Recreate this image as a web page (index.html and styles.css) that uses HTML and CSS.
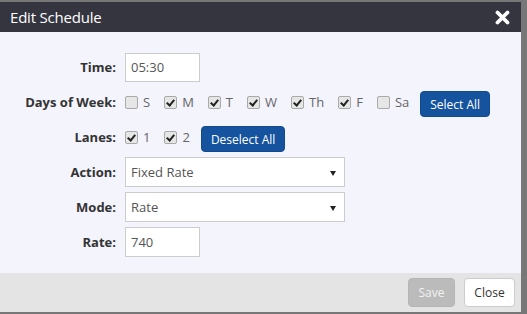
FILE: index.html
```html
<!DOCTYPE html>
<html lang="en">
<head>
	<meta charset="UTF-8">
	<title>Edit Schedule</title>
	<link rel="stylesheet" href="styles.css">
</head>
<body>
	<div class="modal">
		<!-- header -->
		<div class="modal-head">
			<span class="title">Edit Schedule</span>
			<svg class="close-x" width="15" height="15" viewBox="0 0 15 15">
				<path d="M2.5 2.5 L12.5 12.5 M12.5 2.5 L2.5 12.5" stroke="#fff" stroke-width="3.8" stroke-linecap="round"/>
			</svg>
		</div>
		<!-- form -->
		<div class="modal-body">
			<div class="row">
				<label class="lbl">Time:</label>
				<div class="field"><input class="txt short" type="text" value="05:30"></div>
			</div>
			<div class="row checks">
				<label class="lbl">Days of Week:</label>
				<div class="field">
					<span class="chk"><i class="box"></i>S</span>
					<span class="chk"><i class="box on"></i>M</span>
					<span class="chk"><i class="box on"></i>T</span>
					<span class="chk"><i class="box on"></i>W</span>
					<span class="chk"><i class="box on"></i>Th</span>
					<span class="chk"><i class="box on"></i>F</span>
					<span class="chk last"><i class="box"></i>Sa</span>
					<button class="btn blue">Select All</button>
				</div>
			</div>
			<div class="row checks">
				<label class="lbl">Lanes:</label>
				<div class="field">
					<span class="chk"><i class="box on"></i>1</span>
					<span class="chk last"><i class="box on"></i>2</span>
					<button class="btn blue">Deselect All</button>
				</div>
			</div>
			<div class="row">
				<label class="lbl">Action:</label>
				<div class="field"><div class="sel">Fixed Rate</div></div>
			</div>
			<div class="row">
				<label class="lbl">Mode:</label>
				<div class="field"><div class="sel">Rate</div></div>
			</div>
			<div class="row">
				<label class="lbl">Rate:</label>
				<div class="field"><input class="txt short" type="text" value="740"></div>
			</div>
		</div>
		<!-- footer -->
		<div class="modal-foot">
			<button class="btn save">Save</button>
			<button class="btn close">Close</button>
		</div>
	</div>
</body>
</html>
```

FILE: styles.css
```css
*{box-sizing: border-box;}
body{margin: 0;background: #777;font-family: "Open Sans", "Noto Sans", sans-serif;height: 314px;overflow: hidden;}
.modal{margin: 2px 6px 0 0;background: #f4f4fd;}

.modal-head{height: 30px;background: #35353f;display: flex;align-items: center;justify-content: space-between;padding: 0 11px 0 10px;}
.modal-head .title{color: #fff;font-size: 15px;letter-spacing: -0.2px;}
.modal-head .close-x{display: block;}

.modal-body{padding: 20px 0 16px;}
.row{display: flex;align-items: center;margin-bottom: 5px;min-height: 30px;}
.row:last-child{margin-bottom: 0;}
.lbl{width: 116px;text-align: right;padding-right: 0;font-weight: bold;font-size: 13px;color: #333;}
.field{margin-left: 9px;display: flex;align-items: center;}

.txt{width: 75px;height: 30px;border: 1px solid #ccc;background: #fff;font: 13px "Open Sans", sans-serif;color: #555;padding: 0 5px;}
.row:first-child .txt{height: 29px;}

.checks .field{height: 30px;}
.chk{display: flex;align-items: center;font-size: 13px;color: #666;margin-right: 14px;}
.chk .box{margin-right: 5px;}
.chk.last{margin-right: 11px;}
.box{width: 13px;height: 13px;border: 1px solid #a9a9a9;border-radius: 2px;background: #e6e6e6;position: relative;}
.box.on::after{content: "";position: absolute;left: 3px;top: 1px;width: 3px;height: 6px;border: solid #222;border-width: 0 2px 2px 0;transform: rotate(40deg);}

.btn{font: 12px "Open Sans", sans-serif;border-radius: 4px;cursor: pointer;}
.blue{background: #15539f;color: #fff;border: 1px solid #124a8f;height: 26px;padding: 0 9px;align-self: flex-end;}

.sel{width: 220px;height: 30px;border: 1px solid #ccc;background: #fff;font-size: 13px;color: #555;padding: 0 5px;display: flex;align-items: center;position: relative;}
.sel::after{content: "";position: absolute;right: 8px;top: 13px;border-left: 3px solid transparent;border-right: 3px solid transparent;border-top: 5px solid #222;}

.modal-foot{background: #e4e4e4;height: 39px;display: flex;justify-content: flex-end;align-items: center;padding-right: 6px;gap: 9px;}
.save{background: #bbb;color: #f2f2f2;border: 1px solid #b5b5b5;height: 29px;width: 47px;}
.close{background: #fff;color: #333;border: 1px solid #ccc;height: 29px;width: 51px;}
```
